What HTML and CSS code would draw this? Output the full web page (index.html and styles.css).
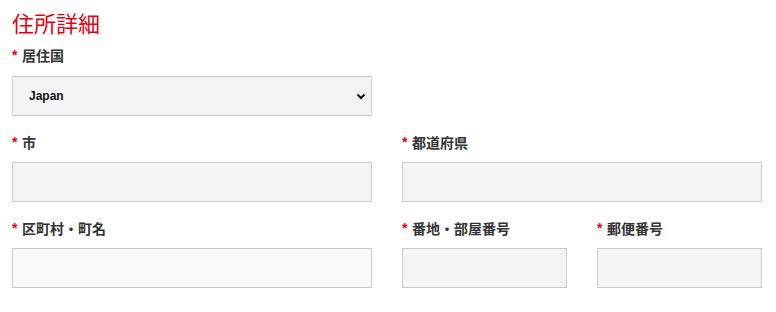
FILE: index.html
```html
<!DOCTYPE html>
<html lang="ja">
<head>
<meta charset="utf-8">
<title>住所詳細</title>
<link rel="stylesheet" href="styles.css">
</head>
<body>
<section class="address">
  <h2 class="title">住所詳細</h2>

  <div class="row row-first">
    <div class="field">
      <label class="field-label" for="country"><span class="req">*</span><span>居住国</span></label>
      <div class="select-wrap">
        <select id="country" class="select">
          <option>Japan</option>
        </select>
        <svg class="chevron" width="10" height="7" viewBox="0 0 10 7" aria-hidden="true"><polyline points="1.5,1.5 5,5 8.5,1.5" fill="none" stroke="#111" stroke-width="2"/></svg>
      </div>
    </div>
  </div>

  <div class="row">
    <div class="field">
      <label class="field-label" for="city"><span class="req">*</span><span>市</span></label>
      <input id="city" class="input" type="text">
    </div>
    <div class="field">
      <label class="field-label" for="pref"><span class="req">*</span><span>都道府県</span></label>
      <input id="pref" class="input" type="text">
    </div>
  </div>

  <div class="row">
    <div class="field">
      <label class="field-label" for="town"><span class="req">*</span><span>区町村・町名</span></label>
      <input id="town" class="input input-light" type="text">
    </div>
    <div class="split">
      <div class="field">
        <label class="field-label" for="street"><span class="req">*</span><span>番地・部屋番号</span></label>
        <input id="street" class="input" type="text">
      </div>
      <div class="field">
        <label class="field-label" for="zip"><span class="req">*</span><span>郵便番号</span></label>
        <input id="zip" class="input" type="text">
      </div>
    </div>
  </div>
</section>
</body>
</html>
```

FILE: styles.css
```css
html, body {
  margin: 0;
  padding: 0;
  background: #fff;
}

body {
  font-family: "Noto Sans CJK JP", "Noto Sans", sans-serif;
  color: #333;
}

.address {
  padding: 9px 12px 0 12px;
  width: 750px;
}

.title {
  margin: 0;
  font-size: 22px;
  line-height: 26px;
  font-weight: 400;
  color: #e60012;
}

.row {
  display: grid;
  grid-template-columns: 360px 360px;
  column-gap: 30px;
  margin-top: 16px;
}

.row-first {
  margin-top: 10px;
}

.split {
  display: grid;
  grid-template-columns: 165px 165px;
  column-gap: 30px;
}

.field {
  display: flex;
  flex-direction: column;
  gap: 10px;
}

.row-first .field {
  gap: 11px;
}

.field-label {
  display: flex;
  align-items: center;
  gap: 4px;
  height: 20px;
  font-size: 14px;
  line-height: 20px;
  font-weight: 700;
  color: #333;
}

.req {
  display: block;
  width: 6px;
  height: 20px;
  color: #e60012;
  font-family: "Liberation Sans", Arial, sans-serif;
  font-size: 14px;
  line-height: 20px;
  font-weight: 700;
}

.select-wrap {
  position: relative;
}

.select {
  display: block;
  box-sizing: border-box;
  width: 360px;
  height: 40px;
  margin: 0;
  padding: 0 30px 0 16px;
  border: 1px solid #cbcbcb;
  border-radius: 0;
  background: #f4f4f4;
  font-family: "Liberation Sans", Arial, sans-serif;
  font-size: 12px;
  font-weight: 700;
  color: #111;
  appearance: none;
  -webkit-appearance: none;
  outline: none;
}

.chevron {
  position: absolute;
  right: 6px;
  top: 17px;
  pointer-events: none;
}

.input {
  display: block;
  box-sizing: border-box;
  width: 100%;
  height: 40px;
  margin: 0;
  padding: 0 10px;
  border: 1px solid #cbcbcb;
  border-radius: 0;
  background: #f4f4f4;
  outline: none;
}

.input-light {
  background: #fafafa;
}
```
